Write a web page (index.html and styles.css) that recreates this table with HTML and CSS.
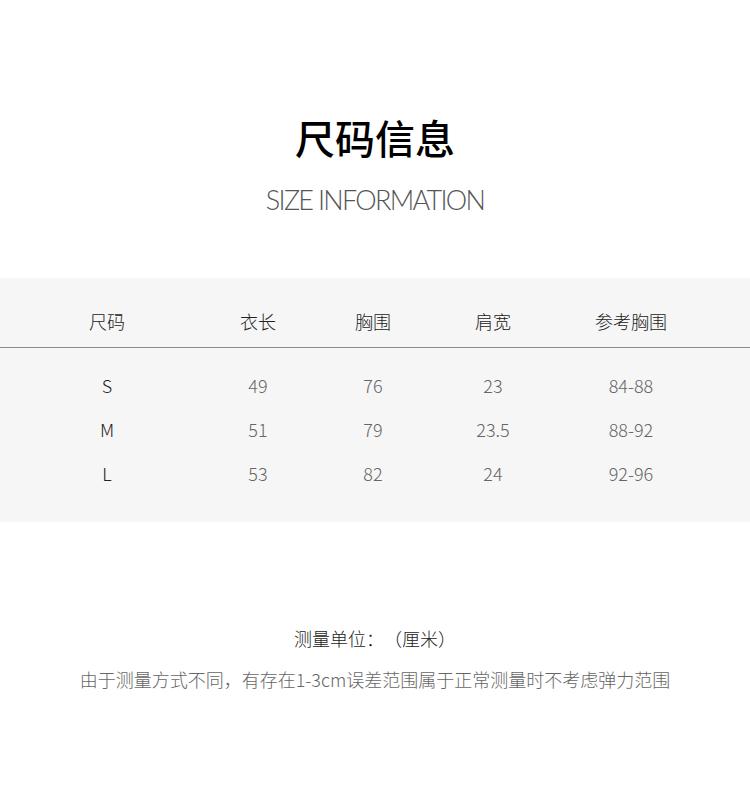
FILE: index.html
```html
<!DOCTYPE html>
<html lang="zh">
<head>
<meta charset="utf-8">
<link rel="stylesheet" href="styles.css">
</head>
<body>
<div class="page">
  <header class="head">
    <h1 class="title">尺码信息</h1>
    <div class="subtitle">SIZE INFORMATION</div>
  </header>
  <section class="band">
    <div class="row th">
      <div>尺码</div><div>衣长</div><div>胸围</div><div>肩宽</div><div>参考胸围</div>
    </div>
    <div class="body">
      <div class="row"><div class="sz">S</div><div>49</div><div>76</div><div>23</div><div>84-88</div></div>
      <div class="row"><div class="sz">M</div><div>51</div><div>79</div><div>23.5</div><div>88-92</div></div>
      <div class="row"><div class="sz">L</div><div>53</div><div>82</div><div>24</div><div>92-96</div></div>
    </div>
  </section>
  <footer class="notes">
    <p class="unit">测量单位：（厘米）</p>
    <p class="desc">由于测量方式不同，有存在1-3cm误差范围属于正常测量时不考虑弹力范围</p>
  </footer>
</div>
</body>
</html>
```
FILE: styles.css
```css
html, body { margin: 0; padding: 0; background: #fff; }
body { font-family: "Noto Sans CJK SC", "Noto Sans", sans-serif; text-spacing-trim: space-all; }
.page { width: 750px; }
.head { padding-top: 110px; height: 278px; box-sizing: border-box; text-align: center; }
.title { margin: 0; font-size: 40px; line-height: 54px; font-weight: 500; color: #000; }
.subtitle { margin-top: 18px; font-family: "Lato", sans-serif; font-weight: 300; font-size: 27px; line-height: 36px; color: #555; letter-spacing: -1.7px; }
.band { background: #f6f6f6; height: 244px; }
.row { display: grid; grid-template-columns: 214px 88px 142px 98px 178px; text-align: center; font-size: 18px; }
.th { height: 70px; align-items: center; border-bottom: 1px solid #8a8a8a; color: #222; font-weight: 300; padding-top: 16px; box-sizing: border-box; }
.body { padding-top: 15px; }
.body .row { height: 44px; align-items: center; color: #666; font-weight: 300; }
.body .sz { color: #222; }
.notes { text-align: center; padding-top: 101px; }
.notes p { margin: 0; }
.notes .unit { font-size: 18px; line-height: 30px; color: #222; font-weight: 300; }
.notes .desc { margin-top: 11px; font-size: 18px; line-height: 30px; color: #666; font-weight: 300; }
```
